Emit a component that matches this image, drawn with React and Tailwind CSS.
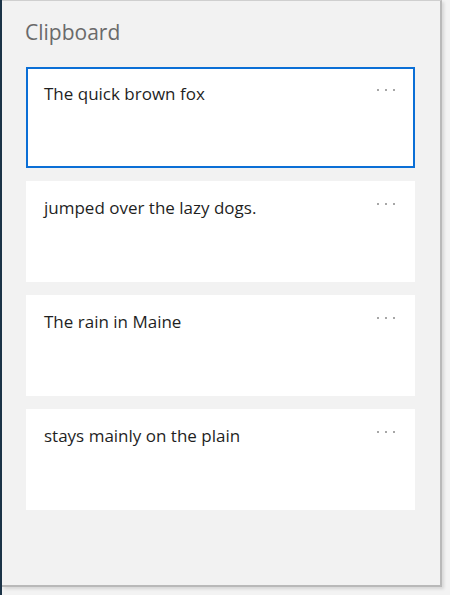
import React from "react";

const items = [
  "The quick brown fox",
  "jumped over the lazy dogs.",
  "The rain in Maine",
  "stays mainly on the plain",
];

function Dots() {
  return (
    <div className="flex gap-[6px] pt-[7px]">
      <span className="h-[2px] w-[2px] rounded-full bg-[#8a8a8a]" />
      <span className="h-[2px] w-[2px] rounded-full bg-[#8a8a8a]" />
      <span className="h-[2px] w-[2px] rounded-full bg-[#8a8a8a]" />
    </div>
  );
}

function Card({ text, selected }) {
  return (
    <div
      className={
        "relative h-[101px] w-[389px] bg-white " +
        (selected ? "border-2 border-[#0b6fd6]" : "")
      }
    >
      <div
        className={
          "flex items-start justify-between " +
          (selected ? "pl-[16px] pr-[18px] pt-[13px]" : "pl-[18px] pr-[20px] pt-[15px]")
        }
      >
        <span className="text-[17px] leading-[24px] text-[#1f1f1f]">{text}</span>
        <Dots />
      </div>
    </div>
  );
}

export default function App() {
  return (
    <div
      className="flex h-[595px] w-[450px] bg-[#f3f3f3]"
      style={{ fontFamily: '"Open Sans", "Noto Sans", sans-serif' }}
    >
      <div className="h-full w-[2px] bg-[#1c3448]" />
      <div className="flex h-[587px] w-[440px] flex-col border-r-2 border-b-2 border-t border-[#b9b9b9] border-t-[#cfcfcf] bg-[#f2f2f2] shadow-[2px_2px_3px_rgba(0,0,0,0.12)]">
        <div className="pl-[23px] pt-[17px] text-[21px] leading-[28px] text-[#6a6a6a]">
          Clipboard
        </div>
        <div className="mt-[21px] flex flex-col gap-[13px] pl-[24px]">
          {items.map((t, i) => (
            <Card key={i} text={t} selected={i === 0} />
          ))}
        </div>
      </div>
    </div>
  );
}
